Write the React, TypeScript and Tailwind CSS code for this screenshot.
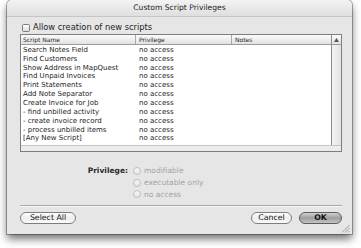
import React from "react";

const rows = [
  "Search Notes Field",
  "Find Customers",
  "Show Address in MapQuest",
  "Find Unpaid Invoices",
  "Print Statements",
  "Add Note Separator",
  "Create Invoice for Job",
  "- find unbilled activity",
  "- create invoice record",
  "- process unbilled items",
  "[Any New Script]",
];

function Radio({ label }: { label: string }) {
  return (
    <div className="h-[11.7px] flex items-center gap-[3px] text-[7.5px] text-[#a3a3a3]">
      <span className="w-[8px] h-[8px] rounded-full border border-[#bdbdbd] bg-gradient-to-b from-[#f7f7f7] to-[#e6e6e6]" />
      <span>{label}</span>
    </div>
  );
}

function Button({ children, primary, w }: { children: React.ReactNode; primary?: boolean; w: string }) {
  return (
    <div
      className={
        "h-[12px] rounded-full border flex items-center justify-center text-[7.8px] leading-none " +
        w +
        (primary
          ? " border-[#5c5c5c] bg-gradient-to-b from-[#d2d2d2] via-[#9e9e9e] to-[#c4c4c4] font-bold text-[#111]"
          : " border-[#7d7d7d] bg-gradient-to-b from-white via-[#eeeeee] to-[#fafafa] text-[#111]")
      }
    >
      {children}
    </div>
  );
}

export default function App() {
  return (
    <div className="w-[361px] h-[248px] bg-white overflow-hidden font-['DejaVu_Sans',sans-serif] text-[#1c1c1c]">
      <div className="relative ml-[7px] w-[345px] h-[234px] bg-[#e6e6e6] rounded-t-[5px] shadow-[0_5px_9px_rgba(0,0,0,0.55),0_0_0_1px_rgba(0,0,0,0.3)] flex flex-col">
        {/* title bar */}
        <div className="h-[17px] rounded-t-[5px] bg-gradient-to-b from-[#f3f3f3] to-[#dfdfdf] border-b border-[#c6c6c6] flex items-center justify-center text-[7.6px] text-[#222]">
          Custom Script Privileges
        </div>

        <div className="flex-1 flex flex-col pl-[13px] pr-[10px]">
          {/* checkbox */}
          <div className="mt-[6px] h-[9px] flex items-center gap-[3px] text-[8.3px]">
            <span className="ml-[2px] w-[8px] h-[8px] rounded-[1.5px] border border-[#7c7c7c] bg-gradient-to-b from-white to-[#dcdcdc]" />
            <span>Allow creation of new scripts</span>
          </div>

          {/* list */}
          <div className="mt-[2px] h-[118px] border border-[#7e7e7e] bg-white flex flex-col">
            <div className="h-[10px] flex border-b border-[#9c9c9c] bg-gradient-to-b from-[#fbfbfb] to-[#e2e2e2] text-[6px] leading-none">
              <div className="w-[115px] border-r border-[#a9a9a9] pl-[2px] flex items-center">Script Name</div>
              <div className="w-[96px] border-r border-[#a9a9a9] pl-[3px] flex items-center">Privilege</div>
              <div className="w-[100px] border-r border-[#8c8c8c] pl-[3px] flex items-center">Notes</div>
              <div className="w-[9px] flex items-center justify-center">
                <svg width="5" height="4" viewBox="0 0 5 4">
                  <path d="M2.5 0 L5 4 L0 4 Z" fill="#555" />
                </svg>
              </div>
            </div>
            <div className="flex-1 flex">
              <div className="flex-1 pt-[1px] text-[7px]">
                {rows.map((r) => (
                  <div key={r} className="h-[8.85px] flex items-center leading-none">
                    <div className="w-[115px] pl-[2px] whitespace-nowrap">{r}</div>
                    <div className="pl-[3px] whitespace-nowrap">no access</div>
                  </div>
                ))}
              </div>
              <div className="w-[10px] border-l border-[#8c8c8c] bg-gradient-to-r from-[#f4f4f4] to-[#e4e4e4]" />
            </div>
            <div className="h-[6px] border-t border-[#c4c4c4] bg-[#ececec]" />
          </div>

          {/* privilege */}
          <div className="mt-[13px] flex">
            <div className="w-[108px] h-[11.7px] flex items-center justify-end text-[7.5px] font-bold text-[#2a2a2a]">
              Privilege:
            </div>
            <div className="ml-[5px] flex flex-col">
              <Radio label="modifiable" />
              <Radio label="executable only" />
              <Radio label="no access" />
            </div>
          </div>

          {/* separator */}
          <div className="mt-[5px] h-[2px] border-t border-[#a9a9a9] bg-[#f8f8f8]" />

          {/* buttons */}
          <div className="mt-[5px] flex items-center">
            <Button w="w-[56px]">Select All</Button>
            <div className="flex-1" />
            <Button w="w-[41px]">Cancel</Button>
            <div className="w-[7px]" />
            <Button w="w-[43px]" primary>
              OK
            </Button>
          </div>
        </div>

        {/* resize grip */}
        <svg className="absolute right-[2px] bottom-[1px]" width="9" height="9" viewBox="0 0 9 9">
          <path d="M8.5 1 L1 8.5 M8.5 4 L4 8.5 M8.5 7 L7 8.5" stroke="#8a8a8a" strokeWidth="0.8" />
        </svg>
      </div>
    </div>
  );
}
